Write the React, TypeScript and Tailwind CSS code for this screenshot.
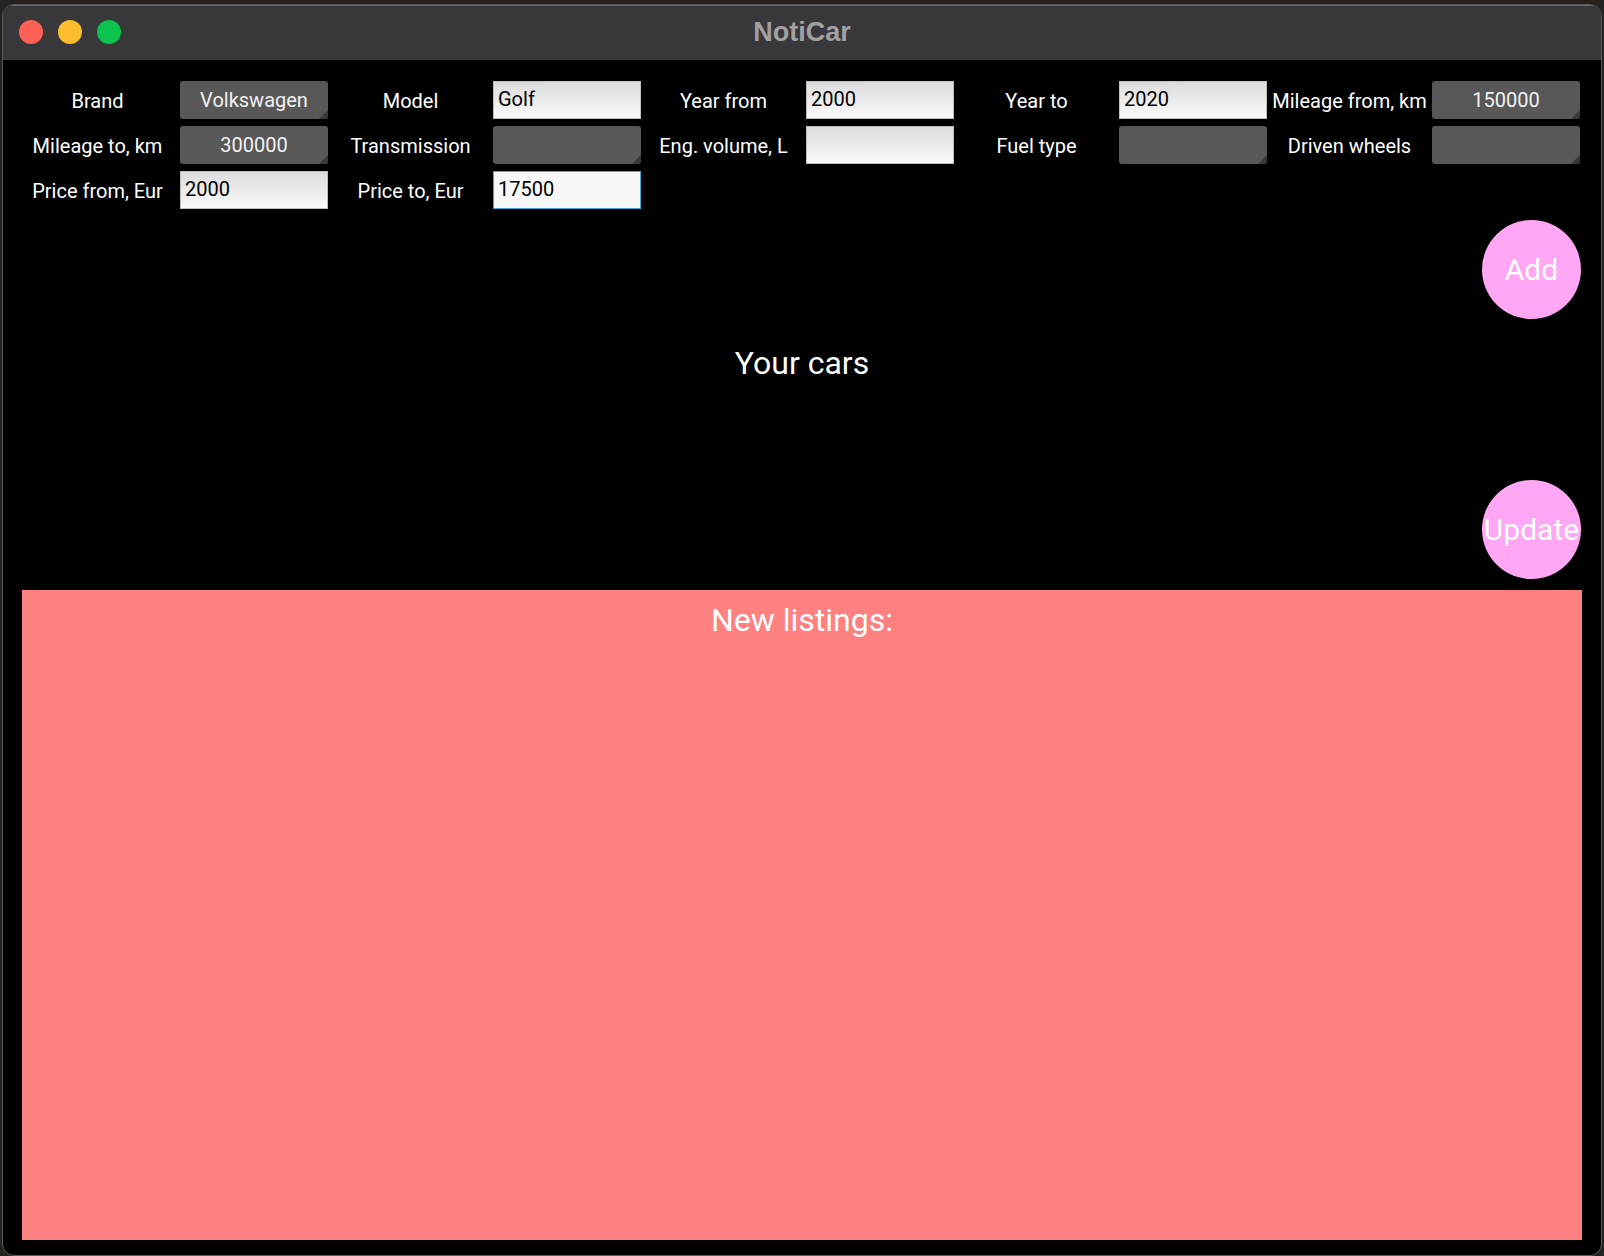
import React from "react";

const roboto = { fontFamily: "Roboto, 'Noto Sans', sans-serif" } as const;

function Label({ text }: { text: string }) {
  return (
    <div className="w-[165px] h-[38px] flex items-center justify-center pt-[1px] text-white text-[20px] leading-[24px] whitespace-nowrap">
      {text}
    </div>
  );
}

function Dropdown({ value }: { value?: string }) {
  return (
    <div className="relative w-[148px] h-[38px] rounded-[3px] bg-[#585858] flex items-center justify-center text-[#f2f2f2] text-[20px] leading-[24px] overflow-hidden">
      {value ?? ""}
      <div className="absolute right-0 bottom-0 w-0 h-0 border-l-[9px] border-l-transparent border-b-[9px] border-b-[#383838]" />
    </div>
  );
}

function Input({ value, focused }: { value?: string; focused?: boolean }) {
  return (
    <div
      className={
        focused
          ? "w-[148px] h-[38px] bg-[#f7f7f7] border border-[#3da8d0] flex items-center pl-[4px] pb-[3px] text-black text-[20px] leading-[24px]"
          : "w-[148px] h-[38px] bg-gradient-to-b from-[#dcdcdc] to-[#fafafa] border border-[#bdbdbd] flex items-center pl-[4px] pb-[3px] text-black text-[20px] leading-[24px]"
      }
    >
      {value ?? ""}
    </div>
  );
}

function Circle({ text }: { text: string }) {
  return (
    <div className="w-[99px] h-[99px] rounded-full bg-[#ffa6f4] flex items-center justify-center text-white text-[30px] leading-none">
      {text}
    </div>
  );
}

export default function App() {
  return (
    <div className="w-[1604px] h-[1256px] bg-[#26221f] pt-[4px] pl-[2px] overflow-hidden">
      <div className="w-[1600px] h-[1252px] rounded-[12px] border border-[#5c5c5c] bg-black overflow-hidden flex flex-col">
        {/* Title bar */}
        <div className="relative h-[55px] bg-[#38383a] border-t border-[#6a6a6a] flex items-center justify-center pb-[2px] shrink-0">
          <div className="absolute left-[16px] top-[14px] flex gap-[15px]">
            <div className="w-[24px] h-[24px] rounded-full bg-[#fe5f57]" />
            <div className="w-[24px] h-[24px] rounded-full bg-[#febc2e]" />
            <div className="w-[24px] h-[24px] rounded-full bg-[#0ac44e]" />
          </div>
          <div
            className="text-[#a1a1a3] text-[27px] font-bold leading-none"
            style={{ fontFamily: "'Liberation Sans', Arial, sans-serif" }}
          >
            NotiCar
          </div>
        </div>

        {/* Content */}
        <div className="flex-1 flex flex-col" style={roboto}>
          {/* Form */}
          <div className="pl-[12px] pt-[21px] flex flex-col gap-[7px]">
            <div className="flex">
              <Label text="Brand" />
              <Dropdown value="Volkswagen" />
              <Label text="Model" />
              <Input value="Golf" />
              <Label text="Year from" />
              <Input value="2000" />
              <Label text="Year to" />
              <Input value="2020" />
              <Label text="Mileage from, km" />
              <Dropdown value="150000" />
            </div>
            <div className="flex">
              <Label text="Mileage to, km" />
              <Dropdown value="300000" />
              <Label text="Transmission" />
              <Dropdown />
              <Label text="Eng. volume, L" />
              <Input />
              <Label text="Fuel type" />
              <Dropdown />
              <Label text="Driven wheels" />
              <Dropdown />
            </div>
            <div className="flex">
              <Label text="Price from, Eur" />
              <Input value="2000" />
              <Label text="Price to, Eur" />
              <Input value="17500" focused />
            </div>
          </div>

          {/* Add */}
          <div className="flex justify-end pr-[20px] pt-[11px]">
            <Circle text="Add" />
          </div>

          {/* Your cars */}
          <div className="h-[161px] pt-[24px] text-center text-white text-[32px] leading-[40px]">
            Your cars
          </div>

          {/* Update */}
          <div className="flex justify-end pr-[20px]">
            <Circle text="Update" />
          </div>

          {/* New listings */}
          <div className="mx-[19px] mt-[11px] h-[650px] bg-[#ff8080] pt-[10px] text-center text-white text-[32px] leading-[40px]">
            New listings:
          </div>
        </div>
      </div>
    </div>
  );
}
